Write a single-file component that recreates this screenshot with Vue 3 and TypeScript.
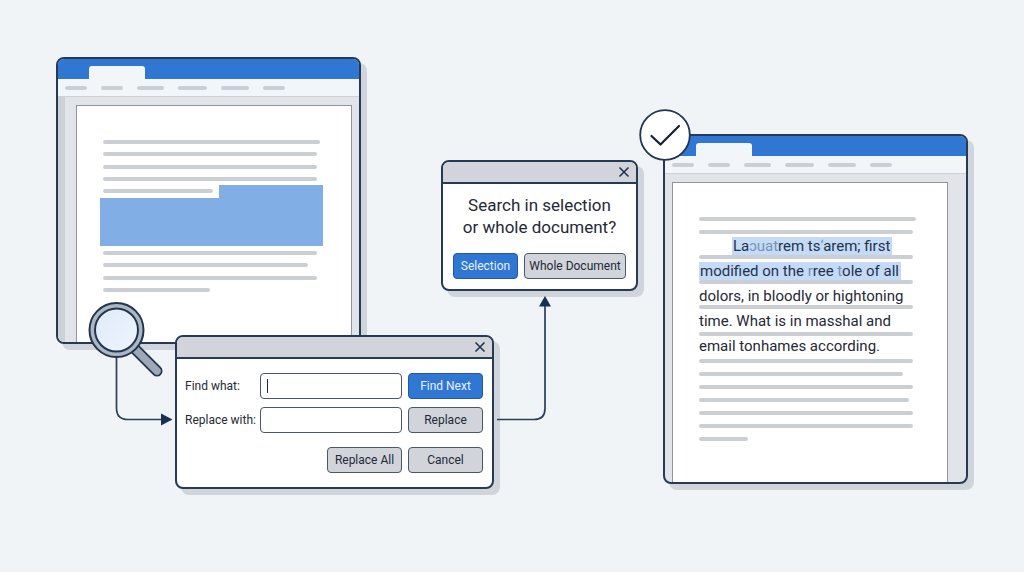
<script setup lang="ts">
import { ref } from 'vue'

interface Bar {
  w: number
  gap?: 'near' | 'mid' | 'wide'
}

const menuBars: number[] = [22, 22, 27, 29, 28, 22]

const beforeSelection: Bar[] = [{ w: 217 }, { w: 214 }, { w: 214 }, { w: 214 }, { w: 110 }]
const afterSelection: Bar[] = [{ w: 214 }, { w: 205 }, { w: 214 }, { w: 107 }]

const resultBars: Bar[] = [
  { w: 217 },
  { w: 214, gap: 'near' },
  { w: 214, gap: 'mid' },
  { w: 214, gap: 'mid' },
  { w: 214, gap: 'mid' },
  { w: 214, gap: 'wide' },
  { w: 214, gap: 'wide' },
  { w: 204, gap: 'near' },
  { w: 214, gap: 'near' },
  { w: 210, gap: 'near' },
  { w: 214, gap: 'near' },
  { w: 214, gap: 'near' },
  { w: 49, gap: 'near' },
]

const findText = ref('')
const replaceText = ref('')
</script>

<template>
  <main class="canvas">
    <section class="window doc doc-source">
      <header class="titlebar"><span class="tab"></span></header>
      <nav class="menu">
        <span v-for="(w, i) in menuBars" :key="i" class="menu-bar" :style="{ width: w + 'px' }"></span>
      </nav>
      <div class="desk">
        <article class="paper">
          <div class="bars before">
            <span v-for="(b, i) in beforeSelection" :key="i" class="bar" :style="{ width: b.w + 'px' }"></span>
          </div>
          <div class="selection"></div>
          <div class="bars after">
            <span v-for="(b, i) in afterSelection" :key="i" class="bar" :style="{ width: b.w + 'px' }"></span>
          </div>
        </article>
      </div>
    </section>

    <section class="window doc doc-result">
      <header class="titlebar"><span class="tab"></span></header>
      <nav class="menu">
        <span v-for="(w, i) in menuBars" :key="i" class="menu-bar" :style="{ width: w + 'px' }"></span>
      </nav>
      <div class="desk">
        <article class="paper">
          <div class="bars">
            <span v-for="(b, i) in resultBars" :key="i" class="bar" :class="b.gap" :style="{ width: b.w + 'px' }"></span>
          </div>
          <p class="passage">
            <span class="line indent"><mark>La<i>ɔuat</i>rem ts<i>‘</i>arem; first</mark></span>
            <span class="line"><mark>modified on the <i>r</i>ree <i>t</i>ole of all</mark></span>
            <span class="line">dolors, in bloodly or hightoning</span>
            <span class="line">time. What is in masshal and</span>
            <span class="line">email tonhames according.</span>
          </p>
        </article>
      </div>
    </section>

    <form class="window dialog find" @submit.prevent>
      <header class="dialog-bar">
        <button type="button" class="close" aria-label="Close">
          <svg width="12" height="12" viewBox="0 0 12 12"><path d="M1.500 1.500L10.500 10.500M10.500 1.500L1.500 10.500" /></svg>
        </button>
      </header>
      <div class="find-body">
        <label for="find-what">Find what:</label>
        <div class="field">
          <input id="find-what" v-model="findText" type="text" />
          <span class="caret"></span>
        </div>
        <button type="submit" class="btn primary">Find Next</button>
        <label for="replace-with">Replace with:</label>
        <div class="field"><input id="replace-with" v-model="replaceText" type="text" /></div>
        <button type="button" class="btn">Replace</button>
        <button type="button" class="btn all">Replace All</button>
        <button type="button" class="btn last">Cancel</button>
      </div>
    </form>

    <section class="window dialog scope" role="dialog" aria-labelledby="scope-title">
      <header class="dialog-bar">
        <button type="button" class="close" aria-label="Close">
          <svg width="12" height="12" viewBox="0 0 12 12"><path d="M1.500 1.500L10.500 10.500M10.500 1.500L1.500 10.500" /></svg>
        </button>
      </header>
      <div class="scope-body">
        <h2 id="scope-title">Search in selection<br />or whole document?</h2>
        <div class="choices">
          <button type="button" class="btn primary">Selection</button>
          <button type="button" class="btn whole">Whole Document</button>
        </div>
      </div>
    </section>

    <svg class="links" width="560" height="430" viewBox="0 0 560 430" aria-hidden="true">
      <g fill="none" stroke="#2a3f5c" stroke-width="1.7">
        <path d="M116.500 356V408Q116.500 419.500 128 419.500H163" />
        <path d="M497 419.500H534Q545 419.500 545 408.500V304" />
      </g>
      <path d="M161 413.500L172.500 419.500L161 425.500Z" fill="#183054" />
      <path d="M539 306.500L545 296L551 306.500Z" fill="#183054" />
    </svg>

    <svg class="lens" width="80" height="80" viewBox="0 0 80 80" aria-hidden="true">
      <defs>
        <linearGradient id="glass" x1="0" y1="0" x2="1" y2="1">
          <stop offset="0" stop-color="#e0ebfa" />
          <stop offset="1" stop-color="#edf4fd" />
        </linearGradient>
      </defs>
      <path d="M47 47L71 71" stroke="#22344e" stroke-width="11" stroke-linecap="round" />
      <path d="M47 47L71 71" stroke="#9da9b8" stroke-width="7.500" stroke-linecap="round" />
      <circle cx="30.500" cy="30" r="27" fill="#acb7c4" stroke="#22344e" stroke-width="2" />
      <circle cx="30.500" cy="30" r="21.500" fill="url(#glass)" stroke="#22344e" stroke-width="2" />
    </svg>

    <svg class="done" width="52" height="52" viewBox="0 0 52 52" role="img" aria-label="Done">
      <circle cx="26" cy="26" r="24.800" fill="#fff" stroke="#22344e" stroke-width="1.800" />
      <path d="M12.500 27L21.500 35.500L40 17" fill="none" stroke="#14202f" stroke-width="2.200" stroke-linecap="round" stroke-linejoin="round" />
    </svg>
  </main>
</template>

<style>
body {
  margin: 0;
  background: #f0f4f7;
}
</style>

<style scoped>
.canvas {
  position: relative;
  min-height: 100vh;
  overflow: hidden;
  background: #f0f4f7;
  color: #1f2937;
  font-family: Roboto, 'Liberation Sans', sans-serif;
}
.canvas * {
  box-sizing: border-box;
}
.window {
  position: absolute;
  display: flex;
  flex-direction: column;
  overflow: hidden;
  border: 2px solid #263a54;
  border-radius: 8px;
  box-shadow: 6px 6px 0 0 #d0d5db;
}

/* document windows */
.doc {
  width: 305px;
  background: #e1e5ea;
}
.doc-source {
  left: 56px;
  top: 57px;
  height: 287px;
}
.doc-result {
  left: 663px;
  top: 134px;
  height: 350px;
}
.titlebar {
  display: flex;
  align-items: flex-end;
  flex: none;
  height: 20px;
  padding-left: 31px;
  background: #2f77d3;
}
.tab {
  width: 56px;
  height: 13px;
  border-radius: 3px 3px 0 0;
  background: #f3f6f9;
}
.menu {
  display: flex;
  align-items: center;
  gap: 14px;
  flex: none;
  height: 18px;
  padding-left: 7px;
  border-bottom: 1px solid #ced2d8;
  background: #f3f6f9;
}
.menu-bar {
  height: 4px;
  border-radius: 2px;
  background: #cbced2;
}
.desk {
  display: flex;
  flex: 1;
  min-height: 0;
  padding-top: 8px;
}
.doc-source .desk {
  padding-left: 18px;
  padding-right: 7px;
  background: linear-gradient(90deg, #cdd1d7 7px, transparent 7px);
}
.doc-result .desk {
  padding-left: 7px;
  padding-right: 18px;
}
.paper {
  position: relative;
  flex: 1;
  padding-left: 26px;
  border: 1px solid #8f959e;
  border-bottom: 0;
  background: #fff;
}
.bars {
  display: flex;
  flex-direction: column;
}
.bar {
  height: 4px;
  flex: none;
  border-radius: 2px;
  background: #cbced2;
}
.before {
  justify-content: space-between;
  height: 53px;
  margin-top: 34px;
}
.selection {
  width: 223px;
  height: 61px;
  margin: -8px 0 0 -3px;
  background: #82aee6;
  clip-path: polygon(119px 0, 100% 0, 100% 100%, 0 100%, 0 13px, 119px 13px);
}
.after {
  justify-content: space-between;
  height: 41px;
  margin-top: 5px;
}
.doc-result .bars {
  padding-top: 34px;
}
.near {
  margin-top: 9px;
}
.mid {
  margin-top: 21px;
}
.wide {
  margin-top: 23px;
}
.passage {
  position: absolute;
  top: 51px;
  left: 26px;
  margin: 0;
  font-size: 15px;
  line-height: 25px;
  white-space: nowrap;
}
.line {
  display: block;
}
.indent {
  padding-left: 33px;
}
.passage mark {
  padding: 0 2px 0 1px;
  background: rgba(166, 198, 238, 0.65);
  color: #1e3250;
}
.passage i {
  font-style: normal;
  color: #7593bb;
}

/* dialogs */
.dialog {
  background: #fff;
}
.find {
  left: 175px;
  top: 335px;
  width: 319px;
}
.scope {
  left: 441px;
  top: 160px;
  width: 197px;
}
.dialog-bar {
  display: flex;
  align-items: center;
  justify-content: flex-end;
  height: 22px;
  padding-right: 6px;
  border-bottom: 2px solid #263a54;
  background: #d1d4da;
}
.close {
  display: flex;
  padding: 0;
  border: 0;
  background: none;
}
.close path {
  fill: none;
  stroke: #22344e;
  stroke-width: 1.6;
}
.btn {
  height: 26px;
  padding: 0;
  border: 1px solid #4a5768;
  border-radius: 4px;
  background: #d1d4da;
  color: #1f2937;
  font: 12px Roboto, 'Liberation Sans', sans-serif;
}
.btn.primary {
  border-color: #2459a0;
  background: #2f77d3;
  color: #e8f1fc;
}
.find-body {
  display: grid;
  grid-template-columns: 75px 1fr 75px;
  align-items: center;
  row-gap: 8px;
  padding: 14px 9px 14px 8px;
  font-size: 12px;
}
.field {
  position: relative;
  margin-right: 6px;
}
.field input {
  display: block;
  width: 100%;
  height: 26px;
  padding: 0 7px;
  border: 1px solid #4a5768;
  border-radius: 4px;
  background: #fff;
  color: #1f2937;
  font: inherit;
}
.caret {
  position: absolute;
  top: 6px;
  left: 7px;
  width: 1px;
  height: 14px;
  background: #1f2937;
}
.all {
  grid-column: 2;
  justify-self: end;
  width: 75px;
  margin: 6px 6px 0 0;
}
.last {
  margin-top: 6px;
}
.scope-body {
  padding: 10px;
}
.scope-body h2 {
  margin: 0;
  font-size: 17px;
  font-weight: 400;
  line-height: 22px;
  text-align: center;
}
.choices {
  display: flex;
  gap: 6px;
  margin-top: 15px;
}
.choices .primary {
  width: 65px;
}
.choices .whole {
  flex: 1;
}

/* overlays */
.links {
  position: absolute;
  top: 0;
  left: 0;
}
.lens {
  position: absolute;
  left: 86px;
  top: 300px;
}
.done {
  position: absolute;
  left: 639px;
  top: 109px;
}
</style>
